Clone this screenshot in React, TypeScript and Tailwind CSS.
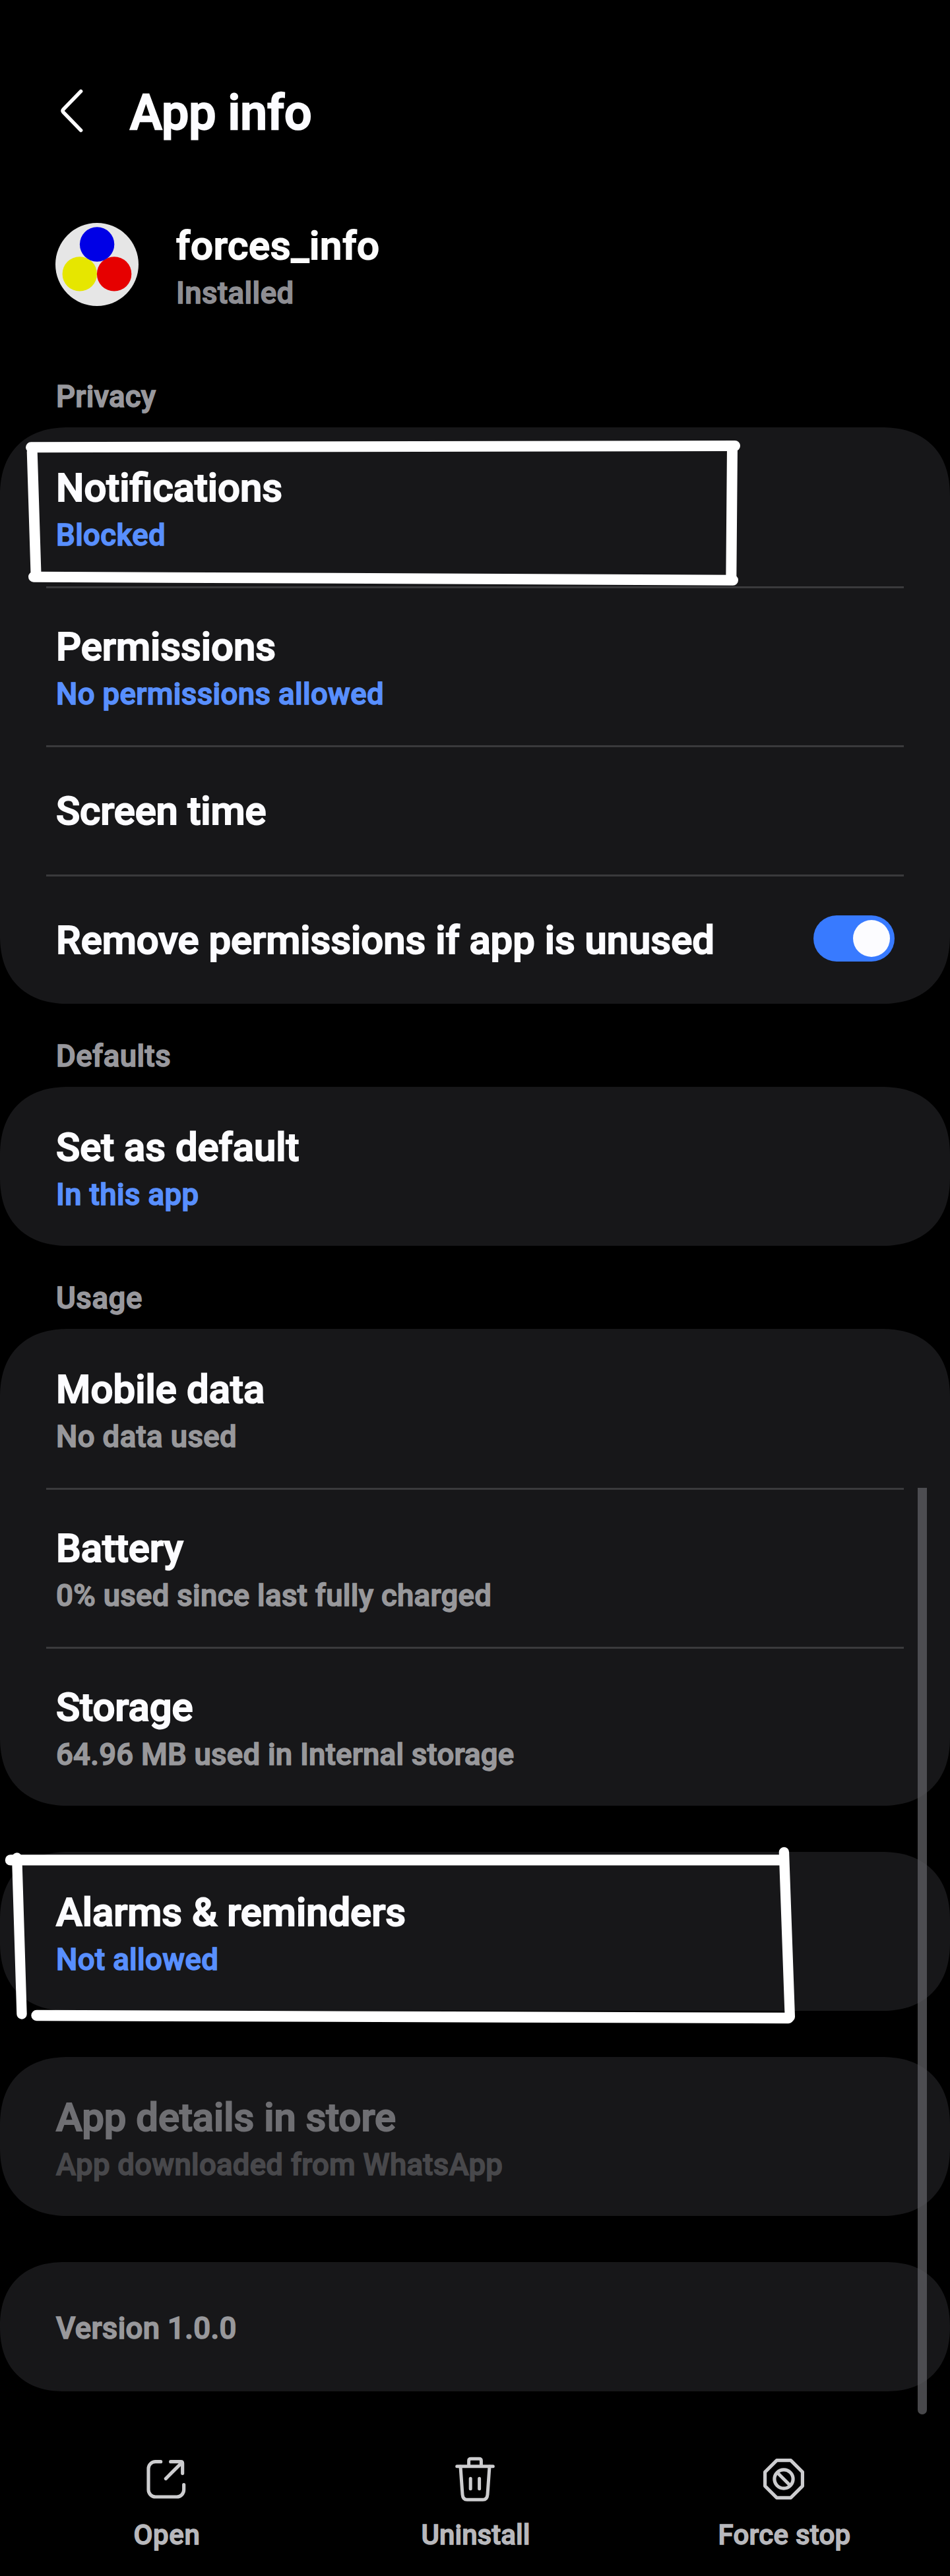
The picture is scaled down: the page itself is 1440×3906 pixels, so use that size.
import type { ReactNode } from "react";

const TITLE =
  "whitespace-nowrap text-[59.8px] leading-[80px] font-medium [-webkit-text-stroke-width:2px]";
const SMALL =
  "whitespace-nowrap text-[45.5px] leading-[60px] font-medium [-webkit-text-stroke-width:1.6px]";

function Card({ children }: { children: ReactNode }) {
  return (
    <section className="w-full rounded-[104px] bg-[#171719] [corner-shape:superellipse(1.2)]">
      {children}
    </section>
  );
}

function Divider() {
  return <div className="mx-[70px] -mb-[3px] h-[3px] bg-[#3a3a3c]" />;
}

function SectionLabel({ text, className }: { text: string; className: string }) {
  return (
    <h2 className={`${SMALL} pl-[85px] text-[#98989d] ${className}`}>{text}</h2>
  );
}

type RowProps = {
  title: string;
  sub: string;
  titleClass?: string;
  subClass?: string;
};

function Row({
  title,
  sub,
  titleClass = "text-[#fcfcff]",
  subClass = "text-[#588fff] tracking-[0.4px]",
}: RowProps) {
  return (
    <div className="flex h-[241px] flex-col pt-[52px] pl-[85px]">
      <span className={`${TITLE} ${titleClass}`}>{title}</span>
      <span className={`${SMALL} mt-[2px] ${subClass}`}>{sub}</span>
    </div>
  );
}

function Toggle() {
  return (
    <span className="mb-[5px] flex h-[70px] w-[123px] items-center justify-end rounded-full bg-[#387aff] pr-[7px]">
      <span className="size-[56px] rounded-full bg-[#fcfcff]" />
    </span>
  );
}

function AppIcon() {
  return (
    <svg width="126" height="126" viewBox="0 0 126 126" className="shrink-0">
      <circle cx="63" cy="63" r="63" fill="#e6e6e6" />
      <circle cx="36.8" cy="77.4" r="26.2" fill="#e6e600" />
      <circle cx="89.1" cy="77.4" r="26.2" fill="#e60000" />
      <circle cx="63.1" cy="32.5" r="26.2" fill="#0000e6" />
    </svg>
  );
}

function OpenIcon() {
  return (
    <svg width="64" height="64" viewBox="120 80 192 192" fill="none" stroke="#cdcdcf" strokeWidth="15.5" strokeLinecap="round" strokeLinejoin="round" className="mt-[3px]">
      <path d="M191 97H167A32 32 0 0 0 135 129V225A32 32 0 0 0 167 257H264A32 32 0 0 0 296 225V202" />
      <path d="M236 97H282Q290 97 290 105V150M214 174L286 102" />
    </svg>
  );
}

function TrashIcon() {
  return (
    <svg width="64" height="72" viewBox="0 0 64 72" fill="none" stroke="#cdcdcf" strokeWidth="5" strokeLinecap="round" strokeLinejoin="round">
      <path d="M4.7 15.7H59.3M22.6 15.7V7.3Q22.6 4.3 25.6 4.3H38.4Q41.4 4.3 41.4 7.3V15.7" />
      <path d="M10 16L13 58.5Q13.6 66.3 20 66.3H44Q50.4 66.3 51 58.5L54 16" />
      <path d="M25.2 34.2V49.8M38.6 34.2V49.8" />
    </svg>
  );
}

function StopIcon() {
  return (
    <svg width="64" height="70" viewBox="-32 -35 64 70" fill="none" stroke="#cdcdcf" strokeWidth="5.2" strokeLinejoin="round">
      <path d="M-10.6 -28.4H10.6L28.4 -10.6V10.6L10.6 28.4H-10.6L-28.4 10.6V-10.6Z" />
      <circle r="14.1" />
      <path d="M-9.5 -9.5L9.5 9.5" />
    </svg>
  );
}

function Action({ icon, label, className = "" }: { icon: ReactNode; label: string; className?: string }) {
  return (
    <button className="flex w-[468px] flex-col items-center">
      <span className="flex h-[90px] items-start">{icon}</span>
      <span className={`pl-[2px] whitespace-nowrap text-[42px] leading-[60px] font-medium text-[#b8b8bc] [-webkit-text-stroke-width:1.4px] ${className}`}>
        {label}
      </span>
    </button>
  );
}

/* Hand-drawn marker frames laid over two of the rows. */
function MarkerFrames() {
  return (
    <svg width="1440" height="3906" viewBox="0 0 1440 3906" fill="none" stroke="#fff" strokeLinecap="round" className="pointer-events-none absolute top-0 left-0">
      <g strokeWidth="16">
        <path d="M47 678.3L1114 676" />
        <path d="M48.7 685L54.5 870" />
        <path d="M51 874.7L1111 879.7" />
        <path d="M1110 677L1108.3 879" />
      </g>
      <g strokeWidth="16.4">
        <path d="M16 2820.4H1186" />
        <path d="M25.7 2817L33 3054" strokeWidth="15.4" />
        <path d="M1188.4 2808.5L1197.3 3058" strokeWidth="15.4" />
        <path d="M55.5 3056L1195 3060" />
      </g>
    </svg>
  );
}

const GRAY = "text-[#98989b]";

export default function App() {
  return (
    <main className="relative flex h-[3906px] w-[1440px] flex-col overflow-hidden bg-black font-['Roboto',sans-serif]">
      <header className="mt-[127px] flex h-[88px] items-center">
        <svg width="44" height="72" viewBox="0 0 44 72" fill="none" stroke="#fcfcff" strokeWidth="5.6" strokeLinecap="round" strokeLinejoin="round" className="ml-[86px] -mt-[6px]">
          <path d="M36.6 6.4L10.2 33.6Q8 36 10.2 38.4L36.6 65.6" />
        </svg>
        <h1 className="ml-[67px] whitespace-nowrap text-[73.3px] leading-[88px] font-medium text-[#fcfcff] [-webkit-text-stroke-width:2.4px]">
          App info
        </h1>
      </header>

      <div className="mt-[123px] flex h-[126px] pl-[84px]">
        <AppIcon />
        <div className="-mt-[5px] ml-[57px] flex flex-col">
          <span className={`${TITLE} tracking-[0.8px] text-[#fcfcfc]`}>forces_info</span>
          <span className={`${SMALL} mt-[2px] tracking-[0.45px] text-[#8e8e93]`}>Installed</span>
        </div>
      </div>

      <SectionLabel text="Privacy" className="mt-[108px] mb-[16px] tracking-[0.26px]" />
      <Card>
        <Row title="Notifications" sub="Blocked" />
        <Divider />
        <Row title="Permissions" sub="No permissions allowed" />
        <Divider />
        <div className="flex h-[196px] items-center pt-[3px] pl-[85px]">
          <span className={`${TITLE} -tracking-[0.1px] text-[#fcfcff]`}>Screen time</span>
        </div>
        <Divider />
        <div className="flex h-[196px] items-center justify-between pt-[3px] pr-[84px] pl-[85px]">
          <span className={`${TITLE} text-[#fcfcff]`}>Remove permissions if app is unused</span>
          <Toggle />
        </div>
      </Card>

      <SectionLabel text="Defaults" className="mt-[50px] mb-[16px] tracking-[0.5px]" />
      <Card>
        <Row title="Set as default" sub="In this app" />
      </Card>

      <SectionLabel text="Usage" className="mt-[50px] mb-[16px] tracking-[0.6px]" />
      <Card>
        <Row title="Mobile data" sub="No data used" titleClass="text-[#fcfcff] tracking-[0.1px]" subClass={`${GRAY} tracking-[0.4px]`} />
        <Divider />
        <Row title="Battery" sub="0% used since last fully charged" subClass={`${GRAY} tracking-[0.33px]`} />
        <Divider />
        <Row title="Storage" sub="64.96 MB used in Internal storage" subClass={`${GRAY} tracking-[0.26px]`} />
      </Card>

      <div className="mt-[70px]">
        <Card>
          <Row title="Alarms & reminders" sub="Not allowed" />
        </Card>
      </div>

      <div className="mt-[70px]">
        <Card>
          <Row title="App details in store" sub="App downloaded from WhatsApp" titleClass="text-[#6f6f73]" subClass="text-[#48484b] tracking-[0.28px]" />
        </Card>
      </div>

      <div className="mt-[70px]">
        <Card>
          <div className="flex h-[196px] items-center pt-[5px] pl-[85px]">
            <span className={`${SMALL} ${GRAY} tracking-[0.34px]`}>Version 1.0.0</span>
          </div>
        </Card>
      </div>

      <nav className="mt-[98px] flex px-[18px]">
        <Action icon={<OpenIcon />} label="Open" className="tracking-[0.6px]" />
        <Action icon={<TrashIcon />} label="Uninstall" className="tracking-[0.05px]" />
        <Action icon={<StopIcon />} label="Force stop" className="tracking-[0.25px]" />
      </nav>

      <div className="absolute top-[2256px] left-[1391px] h-[1405px] w-[14px] rounded-b-full bg-[#5f5f62]/76" />
      <MarkerFrames />
    </main>
  );
}
